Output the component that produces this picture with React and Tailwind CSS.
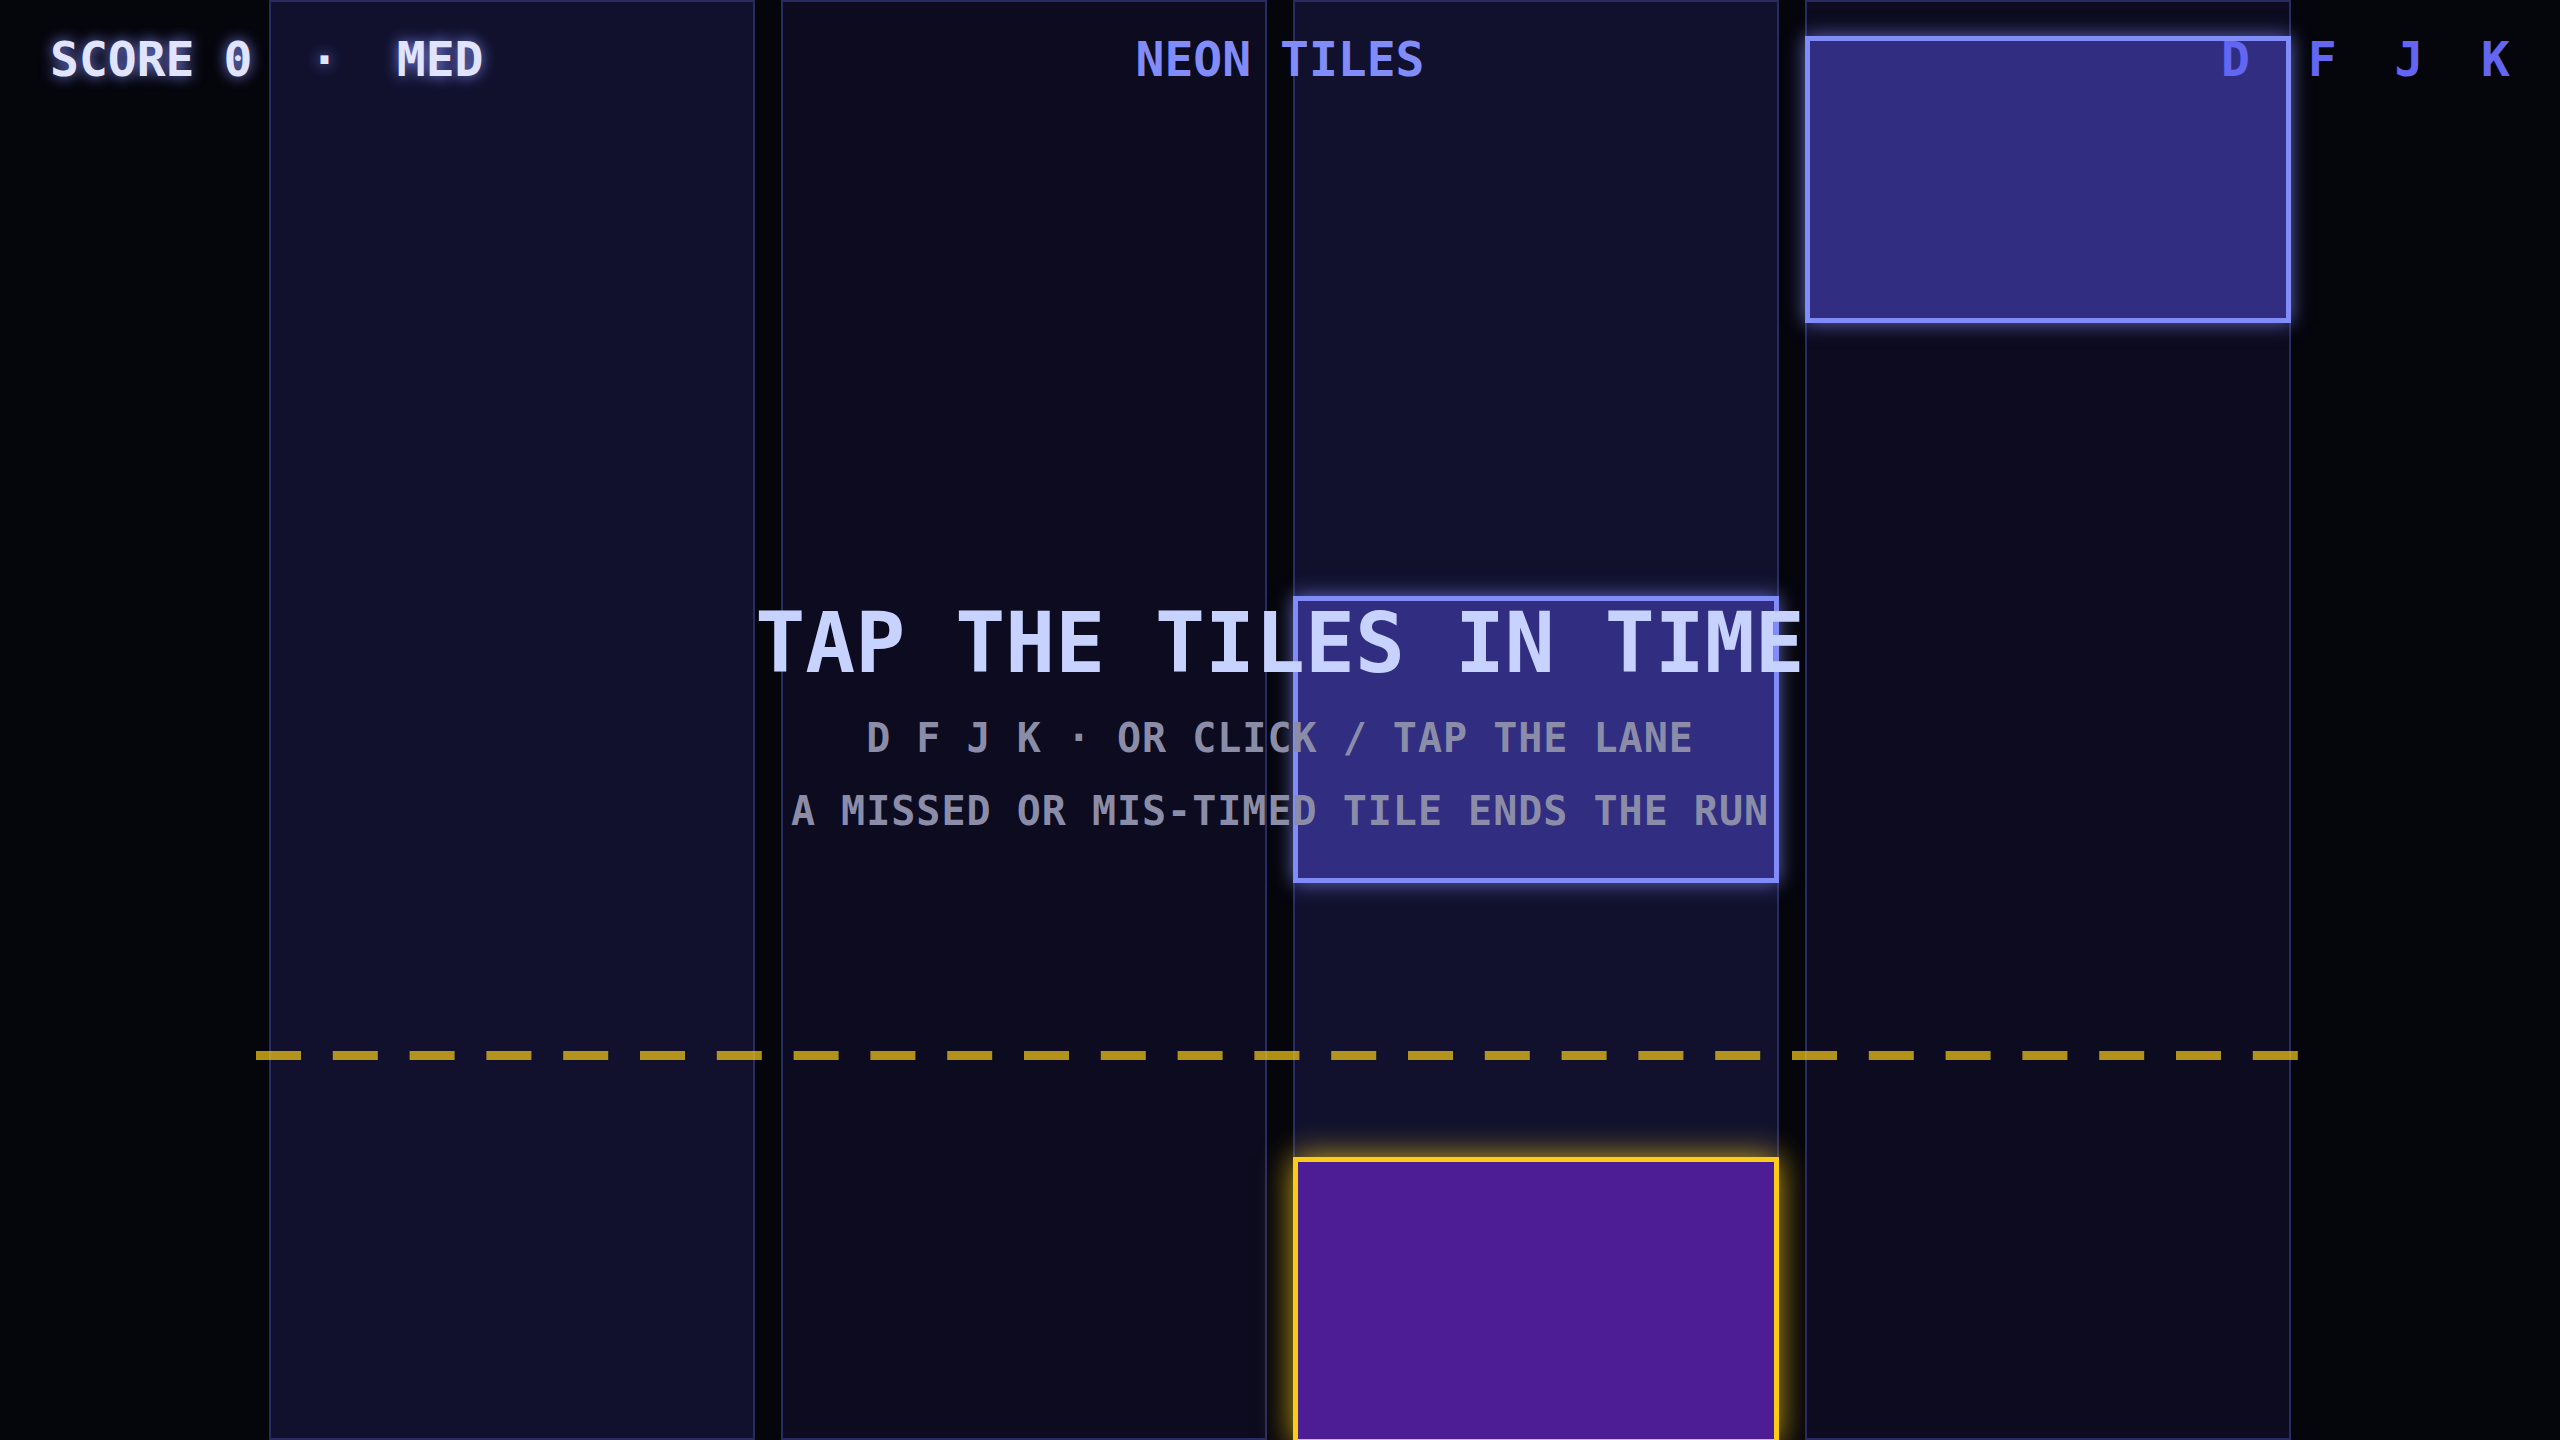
import React from "react";

const lanes = [
  { bg: "bg-[#11112e]", tiles: [] },
  { bg: "bg-[#0c0b1f]", tiles: [] },
  { bg: "bg-[#11112e]", tiles: ["mid", "hit"] },
  { bg: "bg-[#0c0b1f]", tiles: ["top"] },
];

function Tile({ kind }) {
  if (kind === "hit") {
    return (
      <div className="absolute left-[-2px] right-[-2px] top-[1155px] h-[287px] border-[5px] border-[#facc15] bg-[#4c1d95] shadow-[0_0_30px_rgba(250,204,21,0.8)]" />
    );
  }
  if (kind === "mid") {
    return (
      <div className="absolute left-[-2px] right-[-2px] top-[594px] h-[287px] border-[5px] border-[#818cf8] bg-[#312e81] shadow-[0_0_18px_rgba(129,140,248,0.7)]" />
    );
  }
  return (
    <div className="absolute left-[-2px] right-[-2px] top-[34px] h-[287px] border-[5px] border-[#818cf8] bg-[#312e81] shadow-[0_0_18px_rgba(129,140,248,0.7)]" />
  );
}

export default function App() {
  return (
    <div className="relative w-full h-[1440px] overflow-hidden bg-[#05050c] font-['DejaVu_Sans_Mono',monospace] font-bold">
      {/* playfield */}
      <div className="relative mx-auto flex h-full w-[2048px] gap-[26px] px-[13px]">
        {lanes.map((lane, i) => (
          <div
            key={i}
            className={`relative h-full flex-1 border-2 border-[#2a2b62] ${lane.bg}`}
          >
            {lane.tiles.map((t) => (
              <Tile key={t} kind={t} />
            ))}
          </div>
        ))}

        {/* hit line */}
        <div className="absolute left-0 top-[1051px] h-[9px] w-[2048px]">
          <svg width="2048" height="9" viewBox="0 0 2048 9">
            <line
              x1="0"
              y1="4.5"
              x2="2048"
              y2="4.5"
              stroke="#facc15"
              strokeOpacity="0.7"
              strokeWidth="9"
              strokeDasharray="45 31.8"
            />
          </svg>
        </div>
      </div>

      {/* header HUD */}
      <div className="absolute inset-x-0 top-[35px] grid grid-cols-3 px-[50px] text-[48px] leading-none whitespace-pre">
        <div className="text-left text-[#e0e4ff] [text-shadow:0_0_14px_rgba(129,140,248,0.95)]">
          {"SCORE 0  ·  MED"}
        </div>
        <div className="text-center text-[#818cf8]">NEON TILES</div>
        <div className="text-right text-[#6366f1]">{"D  F  J  K"}</div>
      </div>

      {/* start overlay */}
      <div className="absolute inset-x-0 top-[602px] flex flex-col items-center gap-[33px] leading-none">
        <div className="text-[83px] leading-none text-[#c7d2fe]">TAP THE TILES IN TIME</div>
        <div className="text-[40px] leading-none tracking-[1px] text-[#8b8da8]">
          D F J K · OR CLICK / TAP THE LANE
        </div>
        <div className="text-[40px] leading-none tracking-[1px] text-[#8b8da8]">
          A MISSED OR MIS-TIMED TILE ENDS THE RUN
        </div>
      </div>
    </div>
  );
}
